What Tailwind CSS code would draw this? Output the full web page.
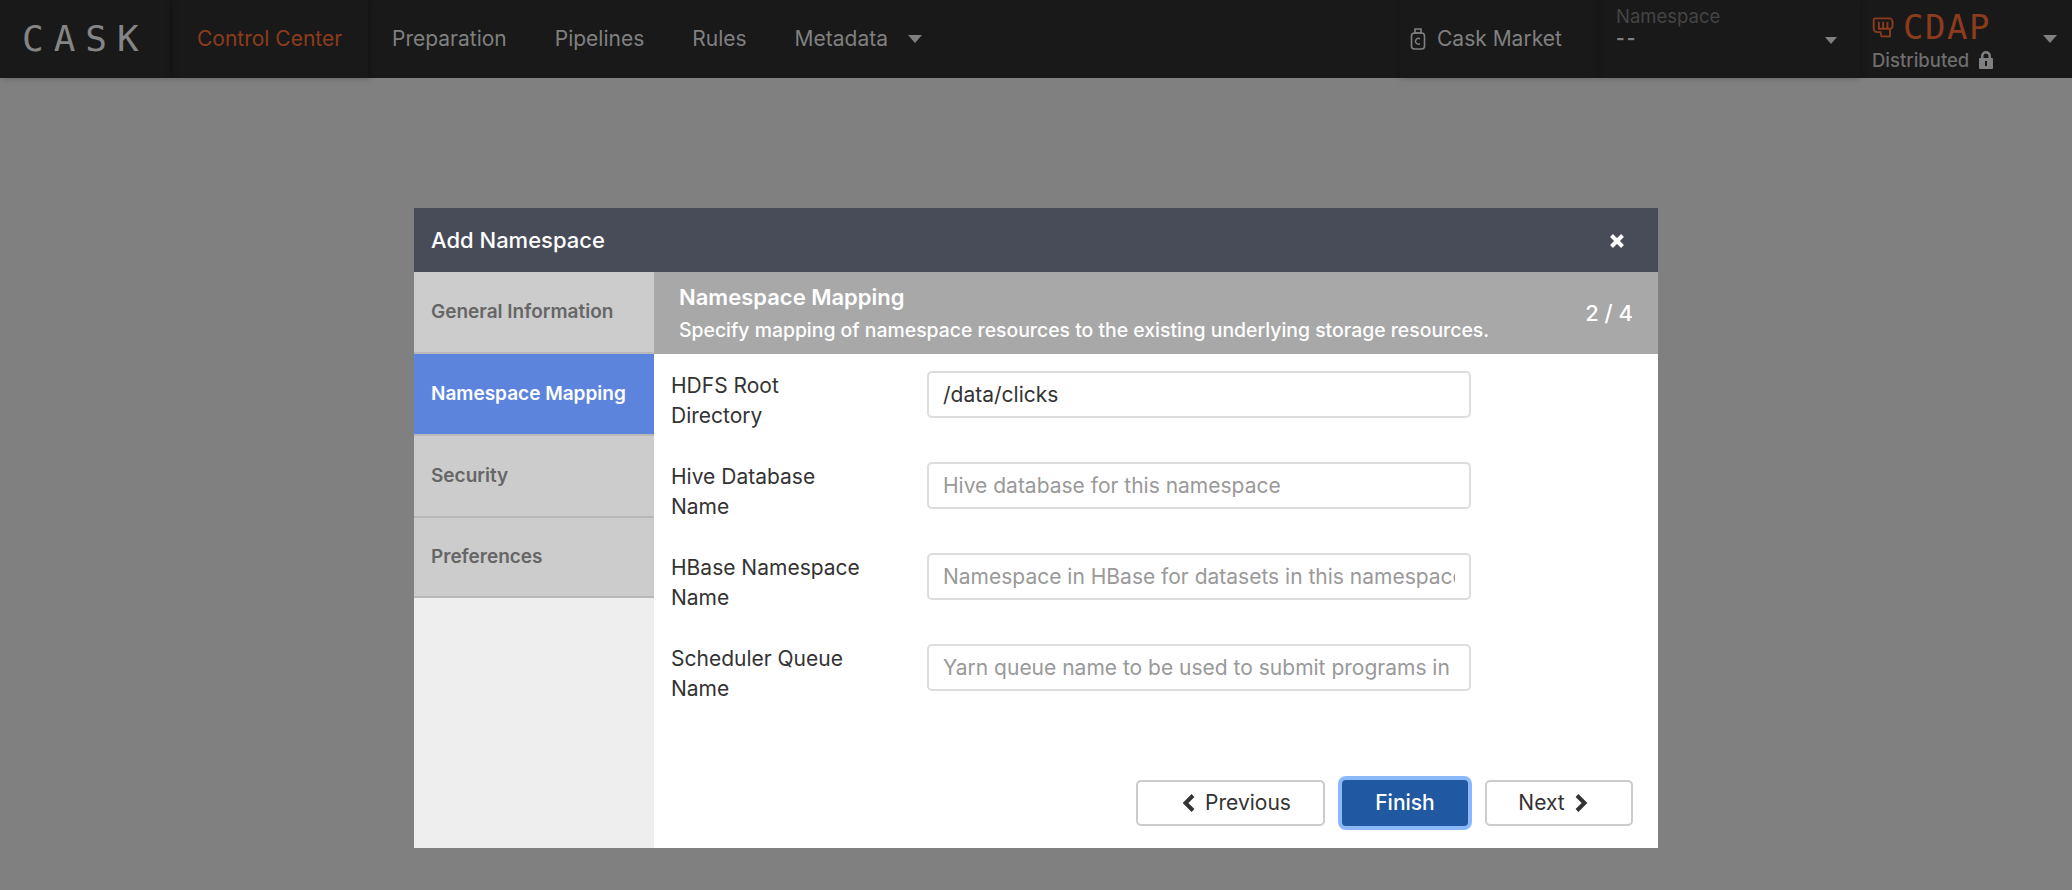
<!DOCTYPE html>
<html lang="en">
<head>
    <meta charset="UTF-8">
    <title>Add Namespace</title>
    <script src="https://cdn.jsdelivr.net/npm/@tailwindcss/browser@4"></script>
</head>
<body class="bg-[#808080] font-['Inter','Liberation_Sans',sans-serif] h-[890px] overflow-hidden">
    <!-- Top navbar, dimmed by the modal backdrop -->
    <nav class="h-[78px] bg-[#191919] flex items-stretch text-[21px] text-[#808080]">
        <div class="w-[170px] pl-[22px] flex items-center shadow-[2px_0_6px_rgba(0,0,0,0.25)]">
            <span class="font-['DejaVu_Sans_Mono',monospace] text-[36px] leading-none tracking-[10px] text-[#858585]">CASK</span>
        </div>
        <div class="w-[198px] pl-[27px] flex items-center text-[#8c3c1c] shadow-[2px_0_6px_rgba(0,0,0,0.25)]">Control Center</div>
        <div class="flex items-center pl-[24px] gap-[48px]">
            <span>Preparation</span>
            <span>Pipelines</span>
            <span>Rules</span>
            <span class="flex items-center gap-[20px]">Metadata
                <span class="w-0 h-0 border-x-[7px] border-x-transparent border-t-[8px] border-t-[#808080]"></span>
            </span>
        </div>
        <div class="ml-auto flex items-stretch">
            <div class="w-[198px] pl-[10px] flex items-center gap-[11px] shadow-[0_0_6px_rgba(0,0,0,0.25)]">
                <svg class="w-[16px] h-[24px]" viewBox="0 0 16 24" fill="none" stroke="#808080" stroke-width="1.6">
                    <path d="M5 2h6v4H5z"/>
                    <rect x="1.5" y="6" width="13" height="16" rx="3"/>
                    <path d="M10 12a2.8 2.8 0 1 0 0 4.5" stroke-width="1.4"/>
                </svg>
                <span>Cask Market</span>
            </div>
            <div class="relative w-[262px] pl-[18px] shadow-[0_0_6px_rgba(0,0,0,0.25)]">
                <div class="text-[18.5px] leading-[22px] pt-[5px] text-[#454545]">Namespace</div>
                <div class="text-[18.5px] leading-[22px] font-bold tracking-[2px] text-[#808080]">--</div>
                <span class="absolute left-[227px] top-[37px] w-0 h-0 border-x-[6px] border-x-transparent border-t-[7px] border-t-[#808080]"></span>
            </div>
            <div class="relative w-[212px] pl-[12px]">
                <div class="flex items-center gap-[7px] h-[30px] mt-[12px]">
                    <svg class="w-[24px] h-[24px]" viewBox="0 0 28 26" fill="none" stroke="#8c3c1c" stroke-width="2.2">
                        <path d="M3 3h17a4 4 0 0 1 4 4v6l-3 3v8H11l-1-5H6a4 4 0 0 1-4-4V4z"/>
                        <path d="M8 7v7M13 7v7M18 7v7M7 15h14"/>
                    </svg>
                    <span class="font-['DejaVu_Sans_Mono',monospace] text-[34px] leading-none tracking-[1.5px] text-[#8c3c1c]">CDAP</span>
                </div>
                <div class="flex items-center gap-[10px] text-[18.5px] leading-[22px] mt-[7px] font-medium text-[#6e6e6e]">Distributed
                    <svg class="w-[14px] h-[18px]" viewBox="0 0 14 18" fill="#808080">
                        <path fill-rule="evenodd" d="M2 7V5a5 5 0 0 1 10 0v2h1a1 1 0 0 1 1 1v9a1 1 0 0 1-1 1H1a1 1 0 0 1-1-1V8a1 1 0 0 1 1-1h1zm2.5 0h5V5a2.5 2.5 0 0 0-5 0v2zM6 10v5h2v-5H6z"/>
                    </svg>
                </div>
                <span class="absolute left-[183px] top-[35px] w-0 h-0 border-x-[7px] border-x-transparent border-t-[8px] border-t-[#808080]"></span>
            </div>
        </div>
    </nav>

    <!-- Modal -->
    <div class="flex justify-center pt-[130px]">
        <div class="w-[1244px] h-[640px] bg-white flex flex-col">
            <div class="h-[64px] bg-[#484b58] flex items-center justify-between pl-[17px] pr-[33px] text-white">
                <h1 class="text-[22px] font-medium">Add Namespace</h1>
                <svg class="w-[16px] h-[16px] mt-[1px]" viewBox="0 0 16 16" stroke="white" stroke-width="4">
                    <path d="M2.5 2.5l11 11M13.5 2.5l-11 11"/>
                </svg>
            </div>
            <div class="flex flex-1 min-h-0">
                <!-- Steps -->
                <div class="w-[240px] bg-[#eeeeee] text-[19px] font-semibold text-[#666666]">
                    <div class="h-[82px] pl-[17px] flex items-center bg-[#cccccc] border-b-2 border-[#b8b8b8]">General Information</div>
                    <div class="h-[82px] pl-[17px] flex items-center bg-[#5c84dd] border-b-2 border-[#b8b8b8] text-white">Namespace Mapping</div>
                    <div class="h-[82px] pl-[17px] flex items-center bg-[#cccccc] border-b-2 border-[#b8b8b8]">Security</div>
                    <div class="h-[80px] pl-[17px] flex items-center bg-[#cccccc] border-b-2 border-[#b8b8b8]">Preferences</div>
                </div>
                <div class="flex-1 flex flex-col">
                    <div class="h-[82px] bg-[#a8a8a8] flex items-center justify-between pl-[25px] pr-[25px] text-white">
                        <div>
                            <div class="text-[22px] leading-[28px] font-semibold">Namespace Mapping</div>
                            <div class="text-[19.4px] leading-[26px] font-medium mt-[6px]">Specify mapping of namespace resources to the existing underlying storage resources.</div>
                        </div>
                        <div class="text-[22px] font-medium">2 / 4</div>
                    </div>
                    <div class="flex-1 flex flex-col pl-[17px] pr-[25px]">
                        <div class="flex flex-col pt-[17px] gap-[44px] text-[21px] leading-[30px] text-[#333333]">
                            <div class="flex items-start h-[47px]">
                                <label class="w-[256px]">HDFS Root<br>Directory</label>
                                <input class="w-[544px] h-[47px] border-2 border-[#dddddd] rounded-[5px] px-[14px] text-[21px] text-[#333333]" value="/data/clicks">
                            </div>
                            <div class="flex items-start h-[47px]">
                                <label class="w-[256px]">Hive Database<br>Name</label>
                                <input class="w-[544px] h-[47px] border-2 border-[#dddddd] rounded-[5px] px-[14px] text-[21px] placeholder:text-[#999999]" placeholder="Hive database for this namespace">
                            </div>
                            <div class="flex items-start h-[47px]">
                                <label class="w-[256px]">HBase Namespace<br>Name</label>
                                <input class="w-[544px] h-[47px] border-2 border-[#dddddd] rounded-[5px] px-[14px] text-[21px] placeholder:text-[#999999]" placeholder="Namespace in HBase for datasets in this namespace">
                            </div>
                            <div class="flex items-start h-[47px]">
                                <label class="w-[256px]">Scheduler Queue<br>Name</label>
                                <input class="w-[544px] h-[47px] border-2 border-[#dddddd] rounded-[5px] px-[14px] text-[21px] placeholder:text-[#999999]" placeholder="Yarn queue name to be used to submit programs in this namespace">
                            </div>
                        </div>
                        <div class="mt-auto mb-[22px] flex justify-end text-[21px] text-[#333333]">
                            <button class="w-[189px] h-[46px] pl-[12px] border-2 border-[#cccccc] rounded-[5px] flex items-center justify-center gap-[10px]">
                                <svg class="w-[13px] h-[20px]" viewBox="0 0 13 20" fill="none" stroke="#333333" stroke-width="4"><path d="M11 2.5L3.5 10l7.5 7.5"/></svg>
                                Previous
                            </button>
                            <button class="ml-[17px] w-[126px] h-[46px] rounded-[4px] bg-[#2058a2] text-white font-medium shadow-[0_0_0_4px_#8ab8f8]">Finish</button>
                            <button class="ml-[17px] w-[148px] h-[46px] pr-[12px] border-2 border-[#cccccc] rounded-[5px] flex items-center justify-center gap-[10px]">
                                Next
                                <svg class="w-[13px] h-[20px]" viewBox="0 0 13 20" fill="none" stroke="#333333" stroke-width="4"><path d="M2 2.5L9.5 10 2 17.5"/></svg>
                            </button>
                        </div>
                    </div>
                </div>
            </div>
        </div>
    </div>
</body>
</html>
